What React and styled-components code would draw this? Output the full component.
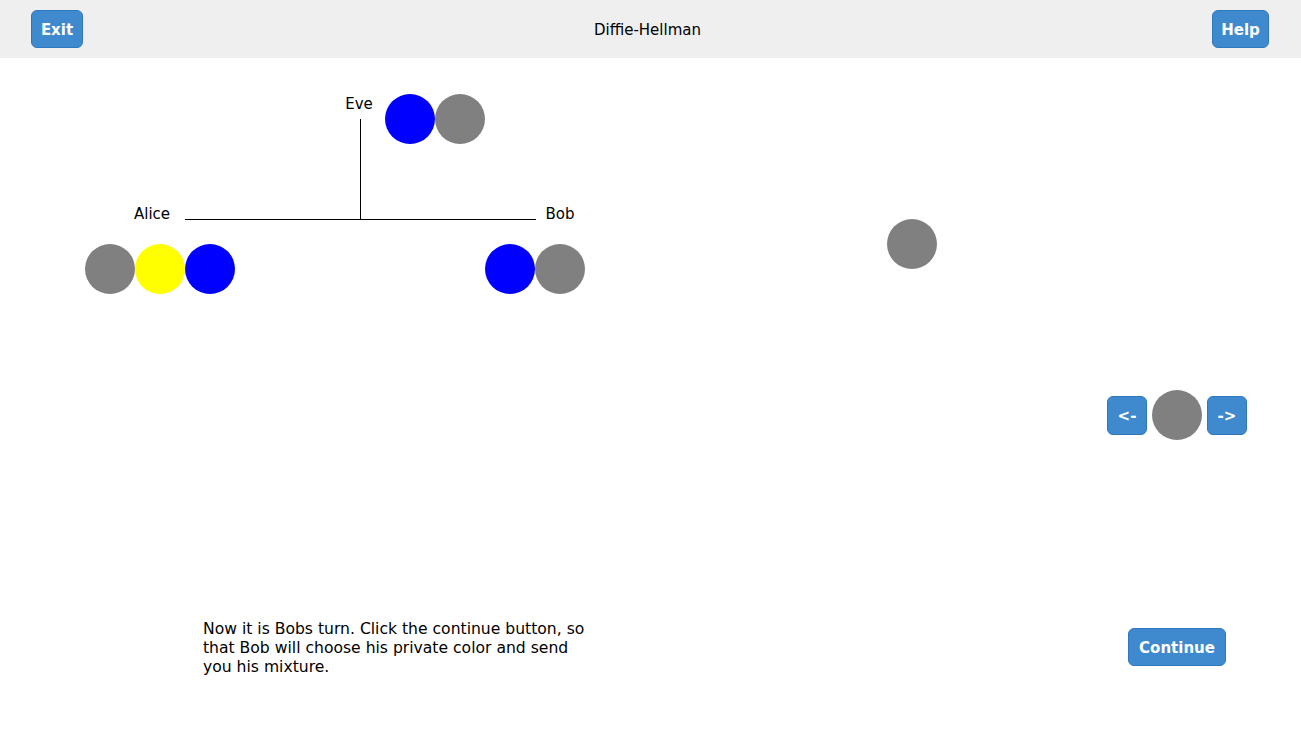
import React from 'react';
import styled, {createGlobalStyle} from 'styled-components';

const GlobalStyle = createGlobalStyle`
    html, body {
        margin: 0;
        padding: 0;
        background: #ffffff;
        font-family: "DejaVu Sans", "Liberation Sans", sans-serif;
        color: #000;
    }
`;

const Page = styled.div`
    width: 1301px;
    height: 744px;
    display: flex;
    flex-direction: column;
    overflow: hidden;
`;

const Header = styled.header`
    height: 58px;
    flex: none;
    background-color: #efefef;
    display: flex;
    align-items: center;
    justify-content: space-between;
    padding: 0 32px 0 31px;
`;

const Title = styled.div`
    font-size: 15px;
    padding-top: 2px;
`;

const Button = styled.button`
    box-sizing: border-box;
    height: ${props => props.h || 38}px;
    min-width: ${props => props.w || 0}px;
    padding: 2px 7px 0;
    border: 1px solid #2f78bd;
    border-radius: 6px;
    background-color: #3f89ce;
    color: #fff;
    font-family: "DejaVu Sans", "Liberation Sans", sans-serif;
    font-weight: bold;
    font-size: 15px;
    display: flex;
    align-items: center;
    justify-content: center;
    cursor: pointer;
`;

const Main = styled.main`
    flex: 1;
    display: grid;
    grid-template-columns: 650px 1fr;
    grid-template-rows: 552px 1fr;
`;

// diagram: nodes placed on a free canvas
const Diagram = styled.div`
    position: relative;
`;

const Lines = styled.svg`
    position: absolute;
    inset: 0;
`;

const Label = styled.div`
    position: absolute;
    left: ${props => props.x}px;
    top: ${props => props.y}px;
    transform: translate(-50%, -50%);
    font-size: 15px;
`;

const Chips = styled.div`
    position: absolute;
    left: ${props => props.x}px;
    top: ${props => props.y}px;
    display: flex;
`;

const Circle = styled.div`
    width: 50px;
    height: 50px;
    border-radius: 50%;
    background-color: ${props => props.color};
    flex: none;
`;

const RightPanel = styled.div`
    display: flex;
    flex-direction: column;
`;

const Mixture = styled(Circle)`
    margin: 161px 0 0 237px;
`;

const Picker = styled.div`
    align-self: flex-end;
    margin: 121px 54px 0 0;
    display: flex;
    align-items: center;
    gap: 5px;
`;

const Message = styled.p`
    margin: 0;
    padding: 10px 0 0 203px;
    width: 392px;
    font-size: 15.6px;
    line-height: 19px;
`;

const Footer = styled.div`
    display: flex;
    justify-content: flex-end;
    align-items: flex-start;
    padding: 18px 75px 0 0;
`;

const GRAY = '#808080';
const BLUE = '#0000ff';
const YELLOW = '#ffff00';

export default function App() {
    return (
        <>
            <GlobalStyle />
            <Page>
                <Header>
                    <Button w={52}>Exit</Button>
                    <Title>Diffie-Hellman</Title>
                    <Button w={57}>Help</Button>
                </Header>
                <Main>
                    <Diagram>
                        <Lines width="650" height="552">
                            <line x1="360.5" y1="61" x2="360.5" y2="161" stroke="#000" strokeWidth="1" />
                            <line x1="185" y1="161.5" x2="536" y2="161.5" stroke="#000" strokeWidth="1" />
                        </Lines>
                        <Label x={359} y={46}>Eve</Label>
                        <Label x={152} y={156}>Alice</Label>
                        <Label x={560} y={156}>Bob</Label>
                        <Chips x={385} y={36}>
                            <Circle color={BLUE} />
                            <Circle color={GRAY} />
                        </Chips>
                        <Chips x={85} y={186}>
                            <Circle color={GRAY} />
                            <Circle color={YELLOW} />
                            <Circle color={BLUE} />
                        </Chips>
                        <Chips x={485} y={186}>
                            <Circle color={BLUE} />
                            <Circle color={GRAY} />
                        </Chips>
                    </Diagram>
                    <RightPanel>
                        <Mixture color={GRAY} />
                        <Picker>
                            <Button w={40} h={39}>&lt;-</Button>
                            <Circle color={GRAY} />
                            <Button w={40} h={39}>-&gt;</Button>
                        </Picker>
                    </RightPanel>
                    <Message>
                        Now it is Bobs turn. Click the continue button, so that Bob will choose his private color and send you his mixture.
                    </Message>
                    <Footer>
                        <Button w={98}>Continue</Button>
                    </Footer>
                </Main>
            </Page>
        </>
    );
}
